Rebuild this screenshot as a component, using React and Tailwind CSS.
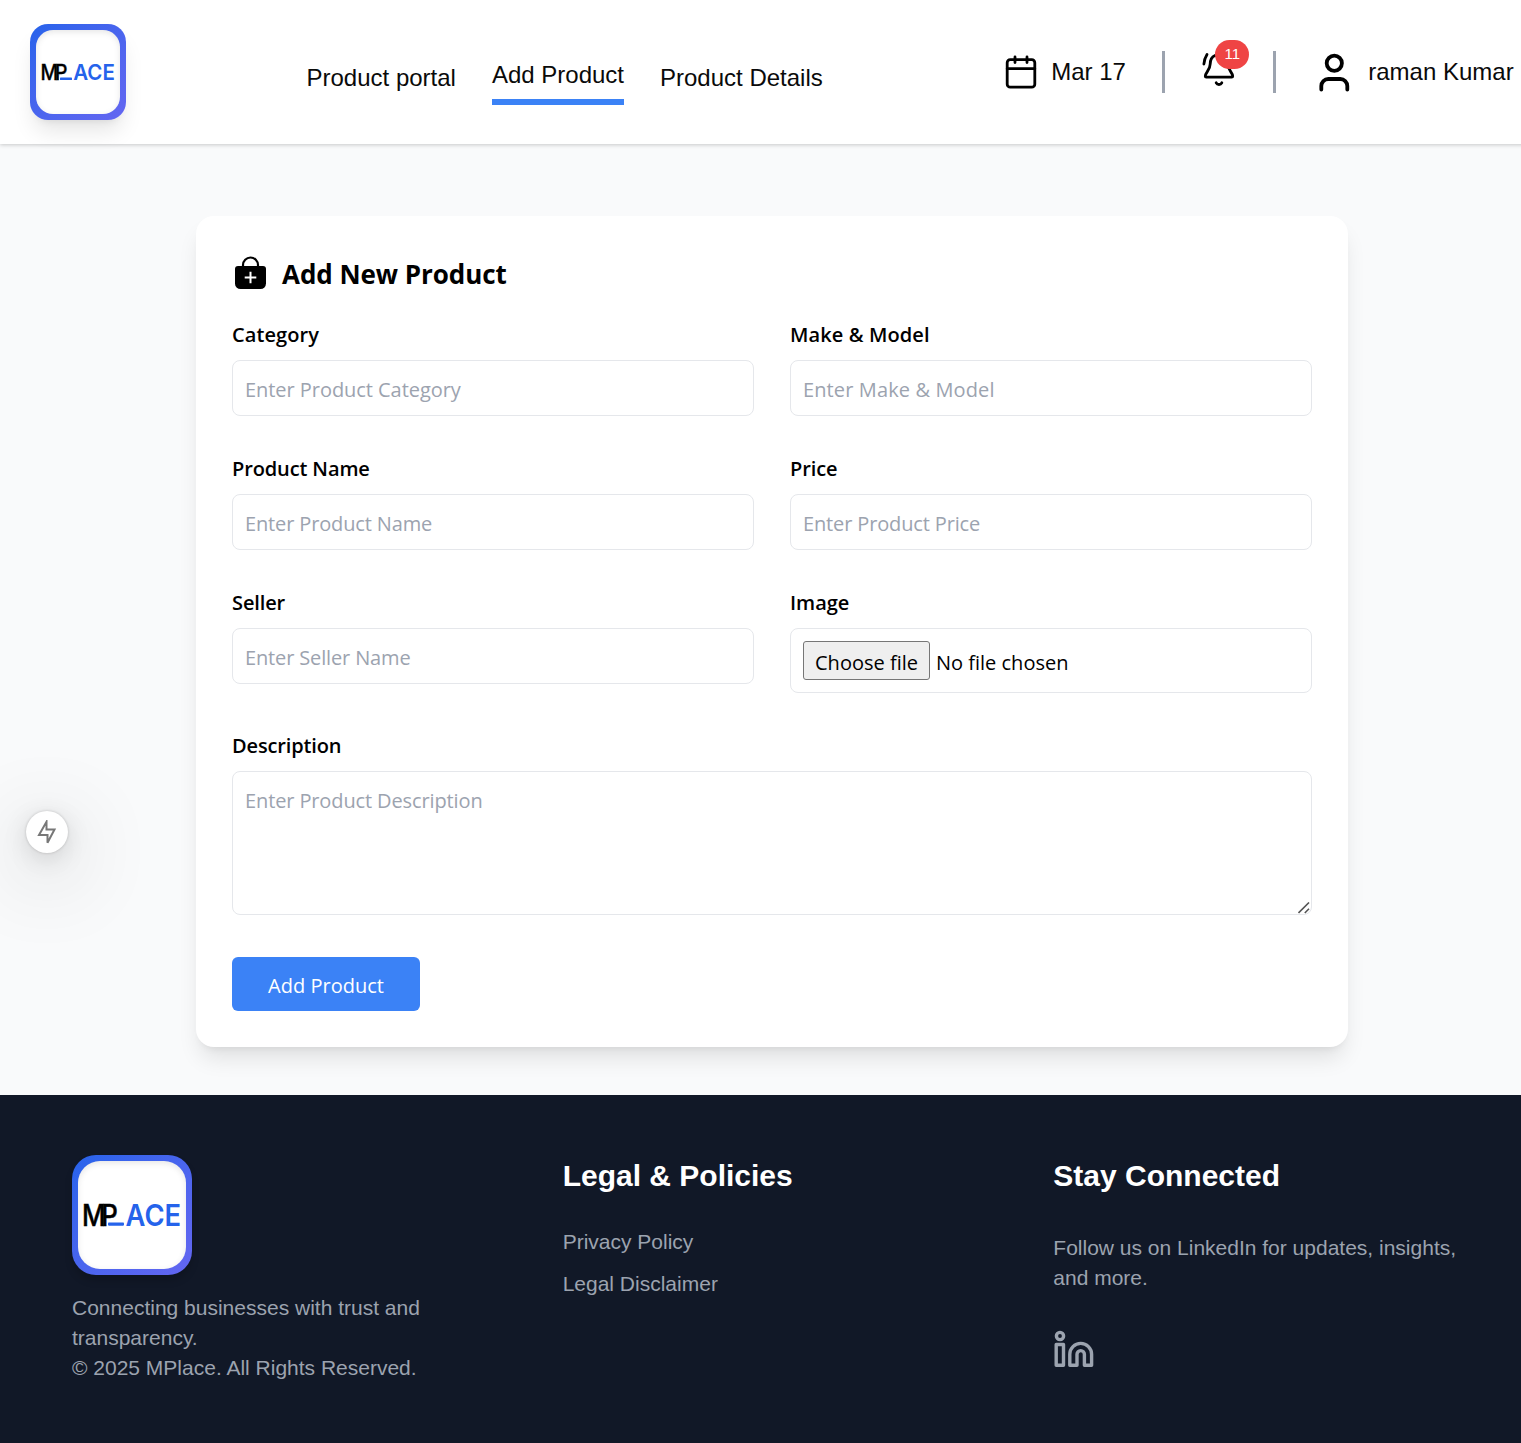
import React from "react";

function Logo({ large }) {
  return (
    <div
      className={
        "shrink-0 bg-linear-to-br from-[#2563eb] to-[#6366f1] p-1.5 " +
        (large
          ? "size-[120px] rounded-[24px] shadow-[0_6px_9px_-1px_rgba(0,0,0,0.2)]"
          : "size-24 rounded-[18px] shadow-[0_15px_22px_-4px_rgba(0,0,0,0.1),0_6px_9px_-6px_rgba(0,0,0,0.1)]")
      }
    >
      <div
        className={
          "flex size-full items-center justify-center bg-white shadow-[inset_0_2px_6px_rgba(0,0,0,0.1)] " +
          (large ? "rounded-[22px]" : "rounded-[17px]")
        }
      >
        <svg
          viewBox="0 0 72 18"
          className={"overflow-visible " + (large ? "w-24" : "w-[72px]")}
          fontFamily="Inter, sans-serif"
          fontSize="22"
          aria-label="MPLACE"
        >
          <text transform="translate(-1.500 17) scale(0.880 1)" fontWeight="500" stroke="#000" strokeWidth="0.300" fill="#000" letterSpacing="-3.600">
            MP
          </text>
          <rect x="17.400" y="12.800" width="13" height="4.800" fill="#fff" />
          <rect x="18" y="14.600" width="12" height="2.400" rx="0.600" fill="#2563eb" />
          <text x="31.200" y="17" fontWeight="600" fill="#2563eb" textLength="41.600" lengthAdjust="spacingAndGlyphs">ACE</text>
        </svg>
      </div>
    </div>
  );
}

function CalendarIcon() {
  return (
    <svg className="size-9" viewBox="0 0 36 36" fill="none" stroke="#000" strokeWidth="2.800" strokeLinecap="round">
      <rect x="4.200" y="5.700" width="27.600" height="27.500" rx="3" />
      <path d="M4.200 14.700h27.600M12 3v5.500M24 3v5.500" />
    </svg>
  );
}

function BellIcon() {
  return (
    <svg className="size-9" viewBox="0 0 36 36" fill="none" stroke="#000" strokeWidth="2.800" strokeLinecap="round" strokeLinejoin="round">
      <path d="M14 5.500C10.500 7 9.200 10 9.200 14c0 6-4.900 8.500-4.900 12.200 0 .6.4 1 1 1h25.400c.6 0 1-.4 1-1 0-3.700-4.900-6.200-4.900-12.200 0-5-3.800-9-8.800-9-1.500 0-2.800.2-4 .7z" />
      <path d="M15.200 32.800c.6 1.200 1.600 1.700 2.800 1.700s2.200-.5 2.800-1.700" />
      <path d="M6 4.500C4.300 7.200 3.200 10 2.900 14" />
    </svg>
  );
}

function UserIcon() {
  return (
    <svg className="h-[42px] w-9" viewBox="0 0 36 42" fill="none" stroke="#000" strokeWidth="3.800" strokeLinecap="round">
      <circle cx="18.300" cy="12.200" r="7.600" />
      <path d="M5.300 38.500v-3.500a7 7 0 0 1 7-7h12a7 7 0 0 1 7 7v3.500" />
    </svg>
  );
}

function BagIcon() {
  return (
    <svg className="mt-1.5 size-9" viewBox="0 0 36 36">
      <path d="M11 11.500V10a7.500 7.500 0 0 1 15 0v1.500" fill="none" stroke="#000" strokeWidth="2.200" />
      <path d="M6 11h25q3 0 3 3v14.500a5.500 5.500 0 0 1-5.500 5.500h-20a5.500 5.500 0 0 1-5.500-5.500V14q0-3 3-3z" fill="#000" />
      <path d="M18.500 16.700v11.600M12.700 22.500h11.600" stroke="#fff" strokeWidth="2" />
    </svg>
  );
}

const labelClass = "mb-2.5 block h-8 text-[20px] leading-[33px] font-semibold text-black";
const fieldClass =
  "block w-full rounded-[8px] border border-[#e5e7eb] bg-white px-3 text-[20px] placeholder:text-[#9ca3af] focus:outline-none";

function Field({ label, placeholder, tracking = "tracking-[-0.140px]", labelTracking = "tracking-[-0.120px]" }) {
  return (
    <label className="block">
      <span className={labelClass + " " + labelTracking}>{label}</span>
      <input className={fieldClass + " h-14 pt-[3px] " + tracking} placeholder={placeholder} />
    </label>
  );
}

function Header() {
  return (
    <header className="relative flex h-36 bg-white pl-[30px] text-[24px] leading-9 text-[#0a0a0a] shadow-[0_1px_4px_rgba(0,0,0,0.2)]">
      <div className="pt-6">
        <Logo />
      </div>
      <nav className="mt-[57px] ml-[180.500px] flex h-12 gap-9 self-start whitespace-nowrap">
        <a className="pt-[3px]">Product portal</a>
        <a className="h-12 border-b-[6px] border-[#3b82f6]">Add Product</a>
        <a className="pt-[3px]">Product Details</a>
      </nav>
      <div className="ml-[180.500px] flex h-36 items-center whitespace-nowrap">
        <CalendarIcon />
        <span className="ml-3 w-[75px]">Mar 17</span>
        <span className="ml-9 h-[42px] w-[3px] bg-[#9ca3af]" />
        <div className="relative -mt-[9px] ml-9 size-9">
          <BellIcon />
          <span className="absolute -top-[10px] left-[14px] flex h-[29px] w-[34px] items-center justify-center rounded-full bg-[#ef4444] pb-px text-[15px] leading-none text-white">
            11
          </span>
        </div>
        <span className="ml-9 h-[42px] w-[3px] bg-[#9ca3af]" />
        <span className="ml-10">
          <UserIcon />
        </span>
        <span className="ml-4">raman Kumar</span>
      </div>
    </header>
  );
}

function ProductForm() {
  return (
    <form
      className="h-[831px] w-[1152px] rounded-[18px] bg-white p-9 shadow-[0_15px_22px_-4px_rgba(0,0,0,0.1),0_6px_9px_-6px_rgba(0,0,0,0.1)]"
      style={{ fontFamily: "'Open Sans', sans-serif" }}
    >
      <h2 className="mb-[30px] flex h-9 items-center gap-[14px] text-[26px] font-bold tracking-[-0.050px] text-black">
        <BagIcon />
        <span className="pt-[9px]">Add New Product</span>
      </h2>
      <div className="grid grid-cols-2 gap-9">
        <Field label="Category" placeholder="Enter Product Category" tracking="tracking-[-0.050px]" labelTracking="tracking-[0.100px]" />
        <Field label="Make & Model" placeholder="Enter Make & Model" tracking="tracking-[0.120px]" labelTracking="tracking-[0.100px]" />
        <Field label="Product Name" placeholder="Enter Product Name" />
        <Field label="Price" placeholder="Enter Product Price" />
        <Field label="Seller" placeholder="Enter Seller Name" />
        <div>
          <span className={labelClass}>Image</span>
          <div className={fieldClass + " flex h-[65px] items-center"}>
            <button type="button" className="h-[39px] w-[127px] rounded-[3px] border border-[#767676] bg-[#efefef] pt-[4px] leading-8">
              Choose file
            </button>
            <span className="ml-1.5 pt-[4px]">No file chosen</span>
          </div>
        </div>
        <label className="relative col-span-2 block">
          <span className={labelClass + " tracking-[-0.150px]"}>Description</span>
          <textarea
            className={fieldClass + " h-36 resize-none pt-[14px] leading-[30px] tracking-[-0.120px]"}
            placeholder="Enter Product Description"
          />
          <svg className="absolute right-[2px] bottom-[1px] size-3" viewBox="0 0 12 12" stroke="#555" strokeWidth="1.600" fill="none">
            <path d="M0.500 11L11 0.500M6.800 11L11 6.800" />
          </svg>
        </label>
      </div>
      <button
        type="button"
        className="mt-[42px] block h-[54px] w-[188px] rounded-[6px] bg-[#3b82f6] pt-[3px] text-[20px] text-white"
      >
        Add Product
      </button>
    </form>
  );
}

function Footer() {
  return (
    <footer className="grid h-[348px] grid-cols-3 gap-[72px] bg-[#111827] px-[72px] pt-[60px] text-[21px] leading-[30px] text-[#9ca3af]">
      <div>
        <Logo large />
        <p className="mt-[18px]">
          Connecting businesses with trust and
          <br />
          transparency.
          <br />© 2025 MPlace. All Rights Reserved.
        </p>
      </div>
      <div>
        <h3 className="text-[30px] leading-[42px] font-bold text-white">Legal &amp; Policies</h3>
        <a className="mt-[30px] block">Privacy Policy</a>
        <a className="mt-3 block">Legal Disclaimer</a>
      </div>
      <div>
        <h3 className="text-[30px] leading-[42px] font-bold text-white">Stay Connected</h3>
        <p className="mt-9">
          Follow us on LinkedIn for updates, insights,
          <br />
          and more.
        </p>
        <svg className="mt-9 h-[42px] w-[42px]" viewBox="0 0 42 42" fill="none" stroke="currentColor" strokeWidth="3.400" strokeLinejoin="round">
          <circle cx="7" cy="7" r="3.600" />
          <path d="M3.200 15.500h7.300v20.800H3.200z" />
          <path d="M16.800 36.300V25.300a10.900 10.900 0 0 1 21.800 0v11h-7.200V25.300a3.700 3.700 0 0 0-7.400 0v11z" />
        </svg>
      </div>
    </footer>
  );
}

export default function App() {
  return (
    <div className="relative h-[1443px] w-full overflow-hidden" style={{ fontFamily: "'Liberation Sans', Arial, sans-serif" }}>
      <div className="w-[1544px]">
        <Header />
        <main className="flex h-[951px] justify-center bg-[#f9fafb] pt-[72px]">
          <ProductForm />
        </main>
        <Footer />
      </div>
      <button
        type="button"
        aria-label="Quick actions"
        className="absolute top-[811px] left-[26px] flex size-[42px] items-center justify-center rounded-full bg-white shadow-[0_0_3px_rgba(0,0,0,0.2),0_6px_24px_rgba(0,0,0,0.13),0_18px_84px_rgba(0,0,0,0.3)]"
      >
        <svg className="size-6" viewBox="0 0 24 24" fill="none" stroke="#777" strokeWidth="2" strokeLinejoin="miter">
          <path d="M11.500 1.800v7.700h8l-7 13.200v-7.700H4L11.500 1.800z" />
        </svg>
      </button>
    </div>
  );
}
